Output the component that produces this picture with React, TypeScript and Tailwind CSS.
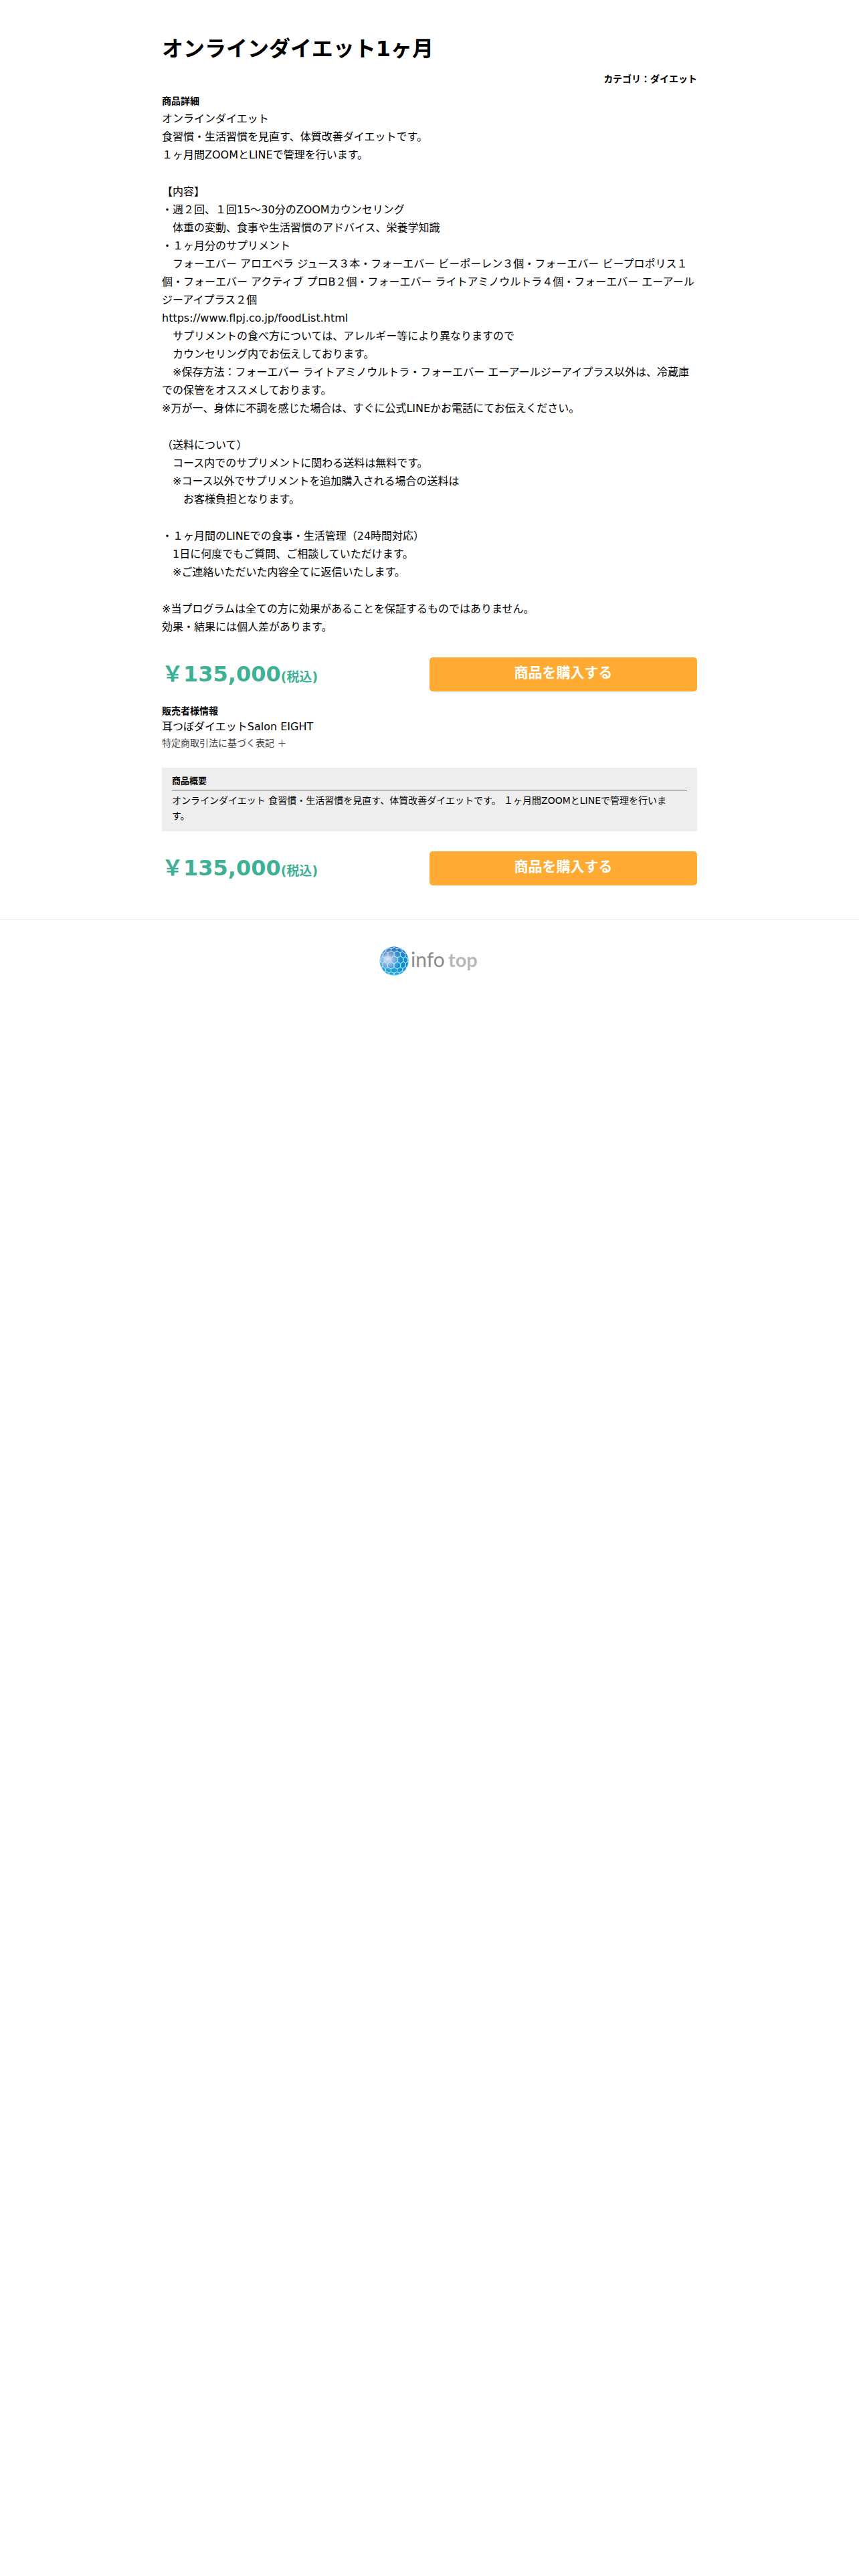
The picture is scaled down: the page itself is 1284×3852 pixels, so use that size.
import React from "react";

const details: string[][] = [
  [
    "オンラインダイエット",
    "食習慣・生活習慣を見直す、体質改善ダイエットです。",
    "１ヶ月間ZOOMとLINEで管理を行います。",
  ],
  [
    "【内容】",
    "・週２回、１回15～30分のZOOMカウンセリング",
    "　体重の変動、食事や生活習慣のアドバイス、栄養学知識",
    "・１ヶ月分のサプリメント",
    "　フォーエバー アロエベラ ジュース３本・フォーエバー ビーポーレン３個・フォーエバー ビープロポリス１個・フォーエバー アクティブ プロB２個・フォーエバー ライトアミノウルトラ４個・フォーエバー エーアールジーアイプラス２個",
    "https://www.flpj.co.jp/foodList.html",
    "　サプリメントの食べ方については、アレルギー等により異なりますので",
    "　カウンセリング内でお伝えしております。",
    "　※保存方法：フォーエバー ライトアミノウルトラ・フォーエバー エーアールジーアイプラス以外は、冷蔵庫での保管をオススメしております。",
    "※万が一、身体に不調を感じた場合は、すぐに公式LINEかお電話にてお伝えください。",
  ],
  [
    "（送料について）",
    "　コース内でのサプリメントに関わる送料は無料です。",
    "　※コース以外でサプリメントを追加購入される場合の送料は",
    "　　お客様負担となります。",
  ],
  [
    "・１ヶ月間のLINEでの食事・生活管理（24時間対応）",
    "　1日に何度でもご質問、ご相談していただけます。",
    "　※ご連絡いただいた内容全てに返信いたします。",
  ],
  [
    "※当プログラムは全ての方に効果があることを保証するものではありません。",
    "効果・結果には個人差があります。",
  ],
];

function Purchase() {
  return (
    <div className="grid grid-cols-2 items-center">
      <p className="text-[32px] leading-[51px] font-bold text-[#3eb194]">
        ￥135,000<span className="text-[19px] leading-none">(税込)</span>
      </p>
      <button
        type="button"
        className="h-[51px] rounded-[5px] bg-[#ffab33] pb-1 text-[21px] font-bold text-white"
      >
        商品を購入する
      </button>
    </div>
  );
}

// Honeycomb wrapped on a sphere: cells shrink towards the rim of the globe.
const RADIUS = 22;
const bulge = (x: number, y: number) => {
  const r = Math.hypot(x, y);
  const k = r === 0 ? 1 : (RADIUS * Math.sin(Math.min(r / 24, 1.57))) / r;
  return `${(RADIUS + x * k).toFixed(1)},${(RADIUS + y * k).toFixed(1)}`;
};
const honeycomb: string[] = [];
for (let row = -4; row <= 4; row++) {
  for (let col = -4; col <= 4; col++) {
    const cx = col * 11 + (row % 2 === 0 ? 0 : 5.5);
    const cy = row * 9.6 - 2;
    if (Math.hypot(cx, cy) > 38) continue;
    const corners: string[] = [];
    for (let i = 0; i < 6; i++) {
      const a = (Math.PI / 3) * i + Math.PI / 6;
      corners.push(bulge(cx + 6.4 * Math.cos(a), cy + 6.4 * Math.sin(a)));
    }
    honeycomb.push(corners.join(" "));
  }
}

function Logo() {
  return (
    <svg viewBox="0 0 150 44" className="h-11 w-[150px]" role="img" aria-label="infotop">
      <defs>
        <radialGradient id="globe" cx="0.28" cy="0.42" r="0.72">
          <stop offset="0" stopColor="#e6e6f5" />
          <stop offset="0.3" stopColor="#8fb3df" />
          <stop offset="0.6" stopColor="#1b93d2" />
          <stop offset="1" stopColor="#0a86c8" />
        </radialGradient>
        <linearGradient id="globeLight" x1="0" y1="0" x2="0" y2="1">
          <stop offset="0" stopColor="#3b5aa8" stopOpacity="0.7" />
          <stop offset="0.4" stopColor="#3b5aa8" stopOpacity="0" />
          <stop offset="0.7" stopColor="#22b4e8" stopOpacity="0" />
          <stop offset="1" stopColor="#22b4e8" stopOpacity="0.8" />
        </linearGradient>
        <clipPath id="disc">
          <circle cx="22" cy="22" r="21.5" />
        </clipPath>
      </defs>
      <circle cx="22" cy="22" r="21.5" fill="url(#globe)" />
      <circle cx="22" cy="22" r="21.5" fill="url(#globeLight)" />
      <g clipPath="url(#disc)" fill="none" stroke="#b4ecfa" strokeWidth="0.8">
        {honeycomb.map((points) => (
          <polygon key={points} points={points} />
        ))}
      </g>
      <text x="47" y="31" fontFamily="Lato, sans-serif" fontSize="30" fill="#8a8a8a">
        info
      </text>
      <text
        x="103"
        y="31"
        fontFamily="Lato, sans-serif"
        fontSize="29"
        fontWeight="700"
        fill="#b8b8b8"
      >
        top
      </text>
    </svg>
  );
}

export default function App() {
  return (
    <div
      lang="ja"
      className="min-h-screen bg-white font-['DejaVu_Sans','Noto_Sans_CJK_JP',sans-serif] text-base text-black"
    >
      <main className="mx-auto max-w-[800px] pt-12">
        <h1 className="text-[32px] leading-[51px] font-bold">オンラインダイエット1ヶ月</h1>
        <p className="mt-2 text-right text-sm leading-[23px] font-bold">カテゴリ：ダイエット</p>
        <section className="mt-[10px]">
          <h2 className="text-sm leading-[23px] font-bold">商品詳細</h2>
          <div className="mt-px flex flex-col gap-[28px] leading-[27px]">
            {details.map((lines, i) => (
              <div key={i}>
                {lines.map((line) => (
                  <p key={line}>{line}</p>
                ))}
              </div>
            ))}
          </div>
        </section>
        <div className="mt-8">
          <Purchase />
        </div>
        <section className="mt-[18px]">
          <h2 className="text-sm leading-[23px] font-bold">販売者様情報</h2>
          <p className="leading-[23px]">耳つぼダイエットSalon EIGHT</p>
          <a href="#law" className="block text-sm leading-[26px] text-[#444444]">
            特定商取引法に基づく表記 ＋
          </a>
        </section>
        <section className="mt-6 bg-[#eeeeee] px-[15px] pt-[9px] pb-[11px]">
          <h2 className="border-b border-[#666b66] pb-[3px] text-[13px] leading-[21px] font-bold">
            商品概要
          </h2>
          <p className="mt-1 text-sm leading-[23px]">
            オンラインダイエット 食習慣・生活習慣を見直す、体質改善ダイエットです。 １ヶ月間ZOOMとLINEで管理を行いま
            <br />
            す。
          </p>
        </section>
        <div className="mt-[30px]">
          <Purchase />
        </div>
      </main>
      <footer className="mt-[50px] flex justify-center border-t border-[#e8e8e8] pt-10">
        <a href="#top">
          <Logo />
        </a>
      </footer>
    </div>
  );
}
